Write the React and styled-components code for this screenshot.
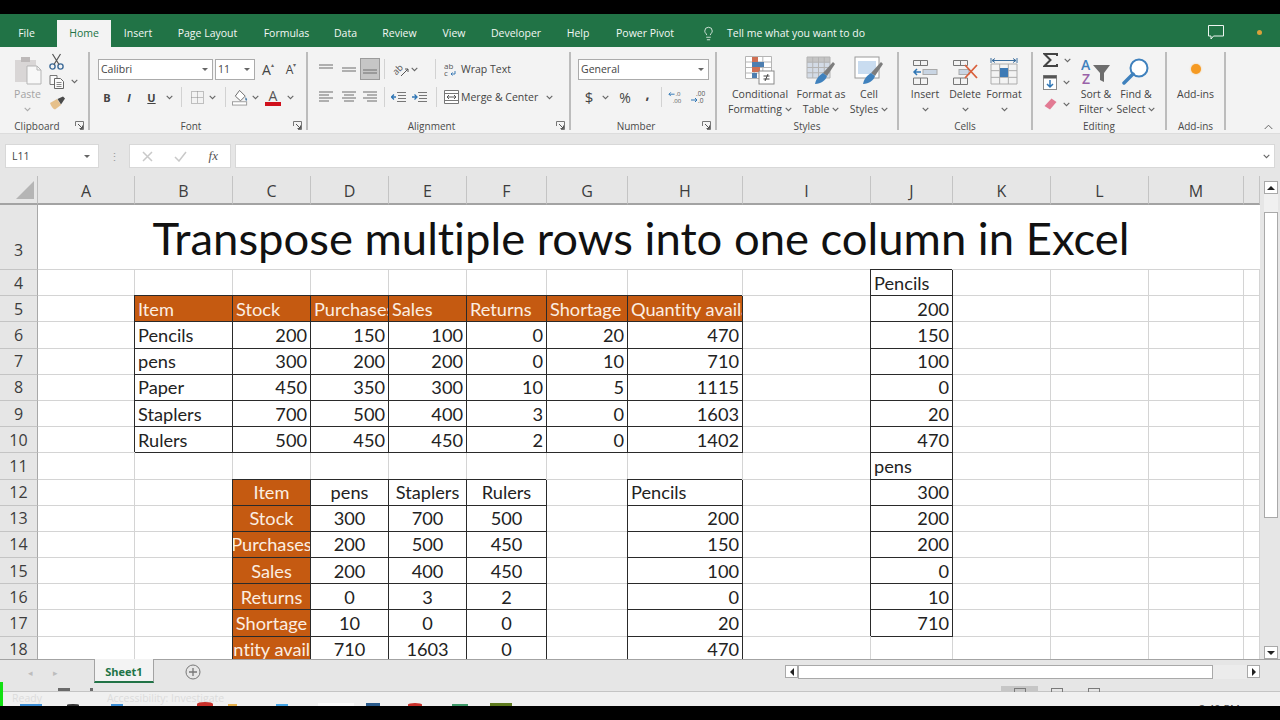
import React from "react";
import styled, { createGlobalStyle } from "styled-components";
import { Lightbulb } from "lucide-react";

const GlobalStyle = createGlobalStyle`
  html, body { margin: 0; padding: 0; background: #000; }
  * { box-sizing: border-box; }
`;

const uiFont = `"Open Sans", "Noto Sans", sans-serif`;
const cellFont = `Lato, "Liberation Sans", sans-serif`;

const Page = styled.div`
  position: relative;
  width: 1280px;
  height: 720px;
  overflow: hidden;
  display: flex;
  flex-direction: column;
  background: #000;
  font-family: ${uiFont};
  color: #444;
`;

const BlackBar = styled.div`
  height: ${(p) => p.$h}px;
  flex: none;
  background: #000;
`;

/* title bar tabs */
const TabBar = styled.div`
  height: 33px;
  flex: none;
  display: flex;
  align-items: flex-end;
  background: #217346;
  color: #f2f7f4;
  font-size: 10.5px;
`;

const Tab = styled.div`
  width: ${(p) => p.$w}px;
  margin-left: ${(p) => (p.$active ? 4 : 0)}px;
  height: 27px;
  padding-bottom: 1px;
  display: flex;
  align-items: center;
  justify-content: center;
  white-space: nowrap;
  background: ${(p) => (p.$active ? "#f3f3f3" : "transparent")};
  color: ${(p) => (p.$active ? "#217346" : "inherit")};
`;

const TellMe = styled.div`
  height: 27px;
  padding-bottom: 1px;
  margin-left: 12px;
  display: flex;
  align-items: center;
  gap: 11px;
  white-space: nowrap;
`;

const TabBarRight = styled.div`
  margin-left: auto;
  height: 33px;
  padding: 4px 18px 0 0;
  display: flex;
  align-items: center;
  gap: 33px;
`;

const AccountDot = styled.span`
  width: 5px;
  height: 5px;
  border-radius: 50%;
  background: #d9a13a;
`;

/* ribbon */
const Ribbon = styled.div`
  position: relative;
  height: 87px;
  flex: none;
  display: flex;
  padding: 5px 0 4px;
  background: #f3f3f3;
  border-bottom: 1px solid #dcdcdc;
  font-size: 10.5px;
`;

const Group = styled.div`
  position: relative;
  width: ${(p) => p.$w}px;
  height: 78px;
  flex: none;
  display: flex;
  flex-direction: column;
  border-right: 2px solid #bcbcbc;
`;

const GroupBody = styled.div`
  flex: 1;
  min-height: 0;
  display: flex;
  padding-left: ${(p) => p.$pad || 0}px;
`;

const GroupLabel = styled.div`
  height: 8px;
  line-height: 8px;
  text-align: center;
  font-size: 10px;
  white-space: nowrap;
  padding-right: ${(p) => p.$shift || 0}px;
  color: #4a4a4a;
`;

const Launcher = styled.svg`
  position: absolute;
  right: 4px;
  bottom: 0;
`;

const Stack = styled.div`
  display: flex;
  flex-direction: column;
  gap: 6px;
  padding-top: 6px;
`;

const ToolRow = styled.div`
  height: 22px;
  display: flex;
  align-items: center;
`;

const Slot = styled.div`
  width: ${(p) => p.$w}px;
  height: ${(p) => p.$h || 22}px;
  flex: none;
  margin-left: ${(p) => p.$ml || 0}px;
  padding-bottom: ${(p) => p.$pb || 0}px;
  display: flex;
  align-items: center;
  justify-content: center;
  color: ${(p) => p.$color || "#444"};
  font-size: ${(p) => p.$size || 11}px;
  font-weight: ${(p) => p.$weight || 400};
  font-style: ${(p) => (p.$italic ? "italic" : "normal")};
  text-decoration: ${(p) => (p.$under ? "underline" : "none")};
  background: ${(p) => (p.$on ? "#c6c6c6" : "transparent")};
  border: ${(p) => (p.$on ? "1px solid #9b9b9b" : "0")};
`;

const TinyMark = styled.span`
  font-size: 6px;
  margin-bottom: 8px;
  color: #666;
`;

const ToolSep = styled.div`
  width: 1px;
  height: 20px;
  flex: none;
  margin-left: ${(p) => p.$l || 6}px;
  margin-right: ${(p) => p.$r || 6}px;
  background: #d2d2d2;
`;

const SelectBox = styled.div`
  width: ${(p) => p.$w}px;
  height: 21px;
  flex: none;
  margin-left: ${(p) => p.$ml || 0}px;
  padding: 0 4px 0 2px;
  display: flex;
  align-items: center;
  justify-content: space-between;
  background: #fff;
  border: 1px solid #ababab;
  color: #444;
  font-size: 10.5px;
`;

const Caret = styled.span`
  width: 0;
  height: 0;
  flex: none;
  border-left: 3px solid transparent;
  border-right: 3px solid transparent;
  border-top: 3px solid ${(p) => p.$color || "#666"};
`;

const TextTool = styled.div`
  display: flex;
  align-items: center;
  white-space: nowrap;
  gap: ${(p) => p.$gap || 3}px;
  margin-left: ${(p) => p.$ml || 0}px;
  font-size: 10.5px;
`;

const LargeTool = styled.div`
  width: ${(p) => p.$w}px;
  flex: none;
  display: flex;
  flex-direction: column;
  align-items: center;
  color: ${(p) => (p.$muted ? "#a3a3a3" : "#444")};
  white-space: nowrap;
  line-height: 15px;
`;

const LargeIcon = styled.div`
  height: 31px;
  margin-top: 2px;
  margin-bottom: 2px;
  display: flex;
  align-items: flex-end;
`;

const LabelLine = styled.div`
  height: 15px;
  display: flex;
  align-items: center;
  gap: 3px;
`;

const SmallColumn = styled.div`
  width: ${(p) => p.$w}px;
  flex: none;
  display: flex;
  flex-direction: column;
`;

const SmallRow = styled.div`
  height: ${(p) => p.$h}px;
  margin-top: ${(p) => p.$mt || 0}px;
  display: flex;
  align-items: center;
  padding-left: ${(p) => p.$pad || 0}px;
  gap: ${(p) => p.$gap || 6}px;
`;

const CollapseIcon = styled.svg`
  position: absolute;
  right: 7px;
  bottom: 3px;
`;

/* formula bar */
const FormulaRow = styled.div`
  height: 42px;
  flex: none;
  display: flex;
  align-items: flex-start;
  padding: 10px 5px 0;
  background: #e6e6e6;
`;

const WhiteBox = styled.div`
  width: ${(p) => p.$w}px;
  height: 24px;
  flex: ${(p) => (p.$grow ? 1 : "none")};
  margin-left: ${(p) => p.$ml || 0}px;
  display: flex;
  align-items: center;
  justify-content: space-between;
  padding: ${(p) => p.$padding || "0 6px"};
  background: #fff;
  border: 1px solid #d8d8d8;
  font-size: 10.5px;
`;

const GripDots = styled.div`
  width: 30px;
  height: 24px;
  flex: none;
  display: flex;
  align-items: center;
  justify-content: center;
  color: #9a9a9a;
  font-size: 11px;
`;

const FxText = styled.span`
  font-family: "Liberation Serif", serif;
  font-style: italic;
  font-size: 13px;
  color: #555;
`;

/* worksheet */
const SheetArea = styled.div`
  flex: 1;
  min-height: 0;
  display: flex;
  overflow: hidden;
  background: #e6e6e6;
`;

const Grid = styled.div`
  width: 1260px;
  flex: none;
  display: grid;
  grid-template-columns: 38px 97px 98px 78px 78px 78px 80px 81px 115px 128px 82px 98px 98px 95px 16px;
  grid-template-rows: 29px 65px repeat(15, 26.2px);
  overflow: hidden;
  background: #fff;
  font-variant-ligatures: none;
`;

const CornerCell = styled.div`
  display: flex;
  align-items: center;
  justify-content: flex-end;
  padding: 0 3px 0 0;
  background: #e6e6e6;
  border-right: 1px solid #bdbdbd;
  border-bottom: 2px solid #a3a3a3;
`;

const ColHead = styled.div`
  display: flex;
  align-items: center;
  justify-content: center;
  padding-top: 2px;
  background: #e6e6e6;
  border-right: 1px solid #c4c4c4;
  border-bottom: 2px solid #a3a3a3;
  font-size: 16px;
  color: #3d3d3d;
`;

const RowHead = styled.div`
  display: flex;
  align-items: ${(p) => (p.$tall ? "flex-end" : "center")};
  justify-content: center;
  padding-bottom: ${(p) => (p.$tall ? 8 : 0)}px;
  background: #e6e6e6;
  border-right: 1px solid #a8a8a8;
  border-bottom: 1px solid #c4c4c4;
  font-size: 16px;
  color: #3d3d3d;
`;

const TitleCell = styled.div`
  grid-column: 2 / -1;
  display: flex;
  align-items: flex-end;
  justify-content: center;
  padding: 0 16px 3px 0;
  border-bottom: 1px solid #d4d4d4;
  font-family: ${cellFont};
  font-size: 45.4px;
  line-height: 56px;
  color: #111;
  white-space: nowrap;
`;

const kindAlign = { text: "flex-start", num: "flex-end", mid: "center", head: "flex-start", headMid: "center" };

const Cell = styled.div`
  display: flex;
  align-items: center;
  justify-content: ${(p) => kindAlign[p.$kind] || "flex-start"};
  padding: 0 3px;
  overflow: hidden;
  white-space: nowrap;
  font-family: ${cellFont};
  font-size: 18.2px;
  color: ${(p) => (p.$kind && p.$kind.startsWith("head") ? "#fbeee2" : "#222")};
  background: ${(p) => (p.$kind && p.$kind.startsWith("head") ? "#c55a11" : "#fff")};
  border-right: 1px solid ${(p) => (p.$kind ? "#2a2a2a" : "#d4d4d4")};
  border-bottom: 1px solid ${(p) => (p.$kind ? "#2a2a2a" : "#d4d4d4")};
  box-shadow: ${(p) => (p.$kind ? "-1px -1px 0 0 #2a2a2a" : "none")};
  span { flex: none; }
`;

const VScroll = styled.div`
  width: 20px;
  flex: none;
  display: flex;
  flex-direction: column;
  align-items: center;
  padding: 5px 2px 0 4px;
  background: #e6e6e6;
`;

const ScrollButton = styled.div`
  width: ${(p) => p.$w || 14}px;
  height: 13px;
  flex: none;
  display: flex;
  align-items: center;
  justify-content: center;
  background: #fff;
  border: 1px solid #a9a9a9;
  margin-top: ${(p) => (p.$push ? "auto" : 0)};
`;

const Arrow = styled.span`
  width: 0;
  height: 0;
  border-style: solid;
  border-color: transparent;
  border-width: 4px;
  ${(p) => (p.$dir === "up" ? "border-bottom-color:#222;border-top-width:0;" : "")}
  ${(p) => (p.$dir === "down" ? "border-top-color:#222;border-bottom-width:0;" : "")}
  ${(p) => (p.$dir === "left" ? "border-right-color:#222;border-left-width:0;" : "")}
  ${(p) => (p.$dir === "right" ? "border-left-color:#222;border-right-width:0;" : "")}
`;

const VTrack = styled.div`
  width: 14px;
  height: 18px;
  flex: none;
  background: #f0f0f0;
`;

const VThumb = styled.div`
  width: 14px;
  height: 306px;
  flex: none;
  background: #fff;
  border: 1px solid #a9a9a9;
`;

/* bottom strip */
const SheetTabs = styled.div`
  height: 27px;
  flex: none;
  display: flex;
  align-items: flex-start;
  background: #e6e6e6;
  border-top: 1px solid #a3a3a3;
`;

const TabNav = styled.div`
  width: 94px;
  height: 25px;
  flex: none;
  display: flex;
  align-items: center;
  justify-content: flex-end;
  gap: 20px;
  padding-right: 36px;
  color: #bdbdbd;
  font-size: 9px;
`;

const SheetTab = styled.div`
  width: 60px;
  height: 24px;
  margin-top: -1px;
  padding-top: 2px;
  flex: none;
  display: flex;
  align-items: center;
  justify-content: center;
  background: #f3f3f3;
  border-left: 1px solid #a3a3a3;
  border-right: 1px solid #a3a3a3;
  border-bottom: 2px solid #217346;
  color: #217346;
  font-weight: 700;
  font-size: 11px;
`;

const AddSheet = styled.svg`
  margin: 4px 0 0 31px;
  flex: none;
`;

const HScroll = styled.div`
  margin: 5px 20px 0 auto;
  width: 475px;
  height: 14px;
  display: flex;
  align-items: stretch;
`;

const HThumb = styled.div`
  width: 415px;
  flex: none;
  background: #fff;
  border: 1px solid #a9a9a9;
`;

const HTrack = styled.div`
  flex: 1;
  background: #ececec;
`;

const StatusBar = styled.div`
  position: relative;
  height: 20px;
  flex: none;
  overflow: hidden;
  background: #f0f0f0;
  font-size: 10.5px;
  color: #dcdcdc;
`;

const StatusTop = styled.div`
  height: 6px;
  display: flex;
  padding-right: 168px;
  background: #e6e6e6;
  border-bottom: 1px solid #c4c4c4;
`;

const StatusMark = styled.span`
  width: ${(p) => p.$w}px;
  height: 3px;
  margin: 2px 0 0 ${(p) => p.$ml}px;
  background: #6a6a6a;
`;

const ViewSlot = styled.div`
  width: 37px;
  height: 6px;
  margin-left: ${(p) => (p.$first ? "auto" : 0)};
  background: ${(p) => (p.$on ? "#c6c6c6" : "transparent")};
  display: flex;
  justify-content: center;
  align-items: flex-end;
`;

const ViewGlyph = styled.span`
  width: 12px;
  height: 4px;
  border: 1px solid #7a7a7a;
  border-bottom: 0;
`;

const StatusText = styled.div`
  display: flex;
  align-items: center;
  gap: 65px;
  padding: 0 0 0 12px;
  height: 11px;
`;

const GhostRow = styled.div`
  position: absolute;
  left: 0;
  right: 0;
  bottom: 0;
  height: 4px;
  display: flex;
  align-items: flex-end;
`;

const Ghost = styled.span`
  width: ${(p) => p.$w}px;
  height: ${(p) => p.$h}px;
  margin-left: ${(p) => p.$ml}px;
  flex: none;
  background: ${(p) => p.$color};
  border-radius: ${(p) => (p.$round ? "50% 50% 0 0" : "0")};
`;

const Clock = styled.span`
  position: absolute;
  right: 40px;
  bottom: -10px;
  font-size: 11px;
  line-height: 14px;
  color: #4a4a4a;
`;

const GreenEdge = styled.div`
  position: absolute;
  left: 0;
  bottom: 14px;
  width: 2.5px;
  height: 24px;
  background: #12e012;
`;

const AddinDot = styled.span`
  width: 10px;
  height: 10px;
  margin-bottom: 11px;
  border-radius: 50%;
  background: #f59a23;
  box-shadow: 0 0 2px #f8c27a;
`;

const Chev = ({ color = "#666" }) => (
  <svg width="7" height="5" viewBox="0 0 7 5">
    <path d="M.7.8 3.5 3.6 6.3.8" fill="none" stroke={color} strokeWidth="1.1" />
  </svg>
);

const LauncherIcon = () => (
  <Launcher width="9" height="9" viewBox="0 0 9 9">
    <path d="M.5 5V.5H8.5V8.5H5" fill="none" stroke="#777" />
    <path d="M3 3 7.5 7.5M7.5 4.5V7.5H4.5" fill="none" stroke="#555" />
  </Launcher>
);

const Lines = ({ items, color = "#777", w = 16, h = 14 }) => (
  <svg width={w} height={h} viewBox={`0 0 ${w} ${h}`}>
    {items.map(([x1, x2, y], i) => (
      <line key={i} x1={x1} x2={x2} y1={y} y2={y} stroke={color} strokeWidth="1.1" />
    ))}
  </svg>
);

const PasteIcon = () => (
  <svg width="28" height="29" viewBox="0 0 28 29">
    <rect x="1" y="4" width="21" height="22" fill="#d9d6d6" />
    <rect x="7" y="1" width="9" height="5" fill="#bdb9b9" />
    <path d="M13 10H23L27 14V28H13Z" fill="#f8f8f8" stroke="#b5b5b5" />
    <path d="M23 10V14H27" fill="none" stroke="#b5b5b5" />
  </svg>
);

const CutIcon = () => (
  <svg width="15" height="18" viewBox="0 0 15 18">
    <g fill="none" stroke="#3e6c99" strokeWidth="1.4">
      <circle cx="3.5" cy="13.5" r="2.6" />
      <circle cx="11.5" cy="13.5" r="2.6" />
    </g>
    <path d="M5 11.5 11.5 1M10 11.5 3.5 1" stroke="#555" strokeWidth="1.2" />
  </svg>
);

const CopyIcon = () => (
  <svg width="16" height="14" viewBox="0 0 16 14">
    <path d="M1 .5H8V9.5H1Z" fill="#fafafa" stroke="#777" />
    <path d="M5.5 3.5H11.5L14.5 6.5V13.5H5.5Z" fill="#fafafa" stroke="#666" />
    <path d="M7.5 7.5H12.5M7.5 9.5H12.5M7.5 11.5H12.5" stroke="#888" />
  </svg>
);

const BrushIcon = () => (
  <svg width="17" height="14" viewBox="0 0 17 14">
    <path d="M1 7 8 3 12 9 6 13.5C4 13 2 10 1 7Z" fill="#e6c08a" />
    <path d="M8.5 3 12 8.5 16 2.5 14 .5Z" fill="#4a4a4a" />
  </svg>
);

const BordersIcon = () => (
  <svg width="13" height="13" viewBox="0 0 13 13">
    <path d="M.5.5H12.5V12.5H.5ZM6.5.5V12.5M.5 6.5H12.5" fill="none" stroke="#8a8a8a" strokeDasharray="1 1" />
  </svg>
);

const FillIcon = () => (
  <svg width="18" height="17" viewBox="0 0 18 17">
    <path d="M8 1 14 7 9 12 3.5 7Z" fill="#fff" stroke="#666" />
    <path d="M14.5 8C16 10 16.5 11 15.5 12 14 12 13.5 10 14.5 8Z" fill="#4d7ea8" />
    <rect x=".5" y="13" width="15" height="3.5" fill="#fff" stroke="#9a9a9a" />
  </svg>
);

const FontColorIcon = () => (
  <svg width="16" height="17" viewBox="0 0 16 17">
    <text x="8" y="12" textAnchor="middle" fontFamily="Open Sans" fontSize="14" fill="#555">A</text>
    <rect x="0" y="13" width="16" height="4" fill="#d0101c" />
  </svg>
);

const OrientIcon = () => (
  <svg width="17" height="15" viewBox="0 0 17 15">
    <text x="1" y="12" transform="rotate(-45 4 10)" fontFamily="Open Sans" fontSize="9" fill="#555">ab</text>
    <path d="M8 14 15 7M12 7H15V10" fill="none" stroke="#555" />
  </svg>
);

const IndentIcon = ({ flip }) => (
  <svg width="16" height="12" viewBox="0 0 16 12">
    <path d="M6 1.5H15M7 4.5H15M7 7.5H15M6 10.5H15" stroke="#777" />
    <path d={flip ? "M0 6H4.5M2.5 3.5 5 6 2.5 8.5" : "M5 6H.5M3 3.5.5 6 3 8.5"} fill="none" stroke="#2f76b5" strokeWidth="1.3" />
  </svg>
);

const WrapIcon = () => (
  <svg width="14" height="15" viewBox="0 0 14 15" fontFamily="Open Sans" fontSize="8" fill="#555">
    <text x="0" y="6.5">ab</text>
    <text x="0" y="14">c</text>
    <path d="M11 9V12H7M8.5 10.5 7 12 8.5 13.5" fill="none" stroke="#3a7ab5" />
  </svg>
);

const MergeIcon = () => (
  <svg width="15" height="14" viewBox="0 0 15 14">
    <path d="M.5.5H14.5V13.5H.5ZM.5 3.5H14.5M.5 10.5H14.5" fill="#fff" stroke="#777" />
    <path d="M3 7H12M5 5 3 7 5 9M10 5 12 7 10 9" fill="none" stroke="#555" />
  </svg>
);

const DecimalIcon = ({ flip }) => (
  <svg width="16" height="14" viewBox="0 0 16 14" fontFamily="Open Sans" fontSize="6.5" fill="#555">
    {flip ? (
      <>
        <text x="6" y="6">.00</text>
        <text x="8" y="13">.0</text>
        <path d="M1 10H7M5 8 7 10 5 12" fill="none" stroke="#2f76b5" />
      </>
    ) : (
      <>
        <text x="8" y="6">.0</text>
        <text x="5" y="13">.00</text>
        <path d="M7 4H1M3 2 1 4 3 6" fill="none" stroke="#2f76b5" />
      </>
    )}
  </svg>
);

const TableGrid = ({ x, y, w, h, nx, ny, stroke = "#a8a8a8" }) => {
  const lines = [];
  for (let i = 0; i <= nx; i++) lines.push(<line key={"v" + i} x1={x + (w * i) / nx} x2={x + (w * i) / nx} y1={y} y2={y + h} stroke={stroke} />);
  for (let i = 0; i <= ny; i++) lines.push(<line key={"h" + i} x1={x} x2={x + w} y1={y + (h * i) / ny} y2={y + (h * i) / ny} stroke={stroke} />);
  return <g>{lines}</g>;
};

const ConditionalIcon = () => (
  <svg width="30" height="29" viewBox="0 0 30 29">
    <rect x="0.5" y="0.5" width="26" height="22" fill="#fff" />
    <TableGrid x={0.5} y={0.5} w={26} h={22} nx={3} ny={4} stroke="#b5b5b5" />
    <rect x="7" y="1" width="6" height="5" fill="#cf6f53" />
    <rect x="7" y="6" width="12" height="5" fill="#4d7eb0" />
    <rect x="7" y="11" width="8" height="5" fill="#cf6f53" />
    <rect x="7" y="17" width="5" height="5" fill="#4d7eb0" />
    <rect x="14" y="15" width="15" height="13" fill="#fff" stroke="#8a8a8a" />
    <path d="M18.5 20H24.5M18.5 23H24.5M23 18 20 25" stroke="#444" fill="none" />
  </svg>
);

const FormatTableIcon = () => (
  <svg width="30" height="29" viewBox="0 0 30 29">
    <rect x="1" y="1" width="23" height="5" fill="#c4c4c4" />
    <rect x="1" y="6" width="23" height="16" fill="#d3dbe6" />
    <TableGrid x={1} y={1} w={23} h={21} nx={4} ny={4} stroke="#b3b3b3" />
    <path d="M17 17 27 6 29 8 21 20Z" fill="#7d7d7d" />
    <path d="M9 28C10 22 14 19 17 17L21 20C20 24 15 28 9 28Z" fill="#3f81bd" />
  </svg>
);

const CellStylesIcon = () => (
  <svg width="30" height="29" viewBox="0 0 30 29">
    <rect x="1" y="1" width="24" height="21" fill="#fff" stroke="#9a9a9a" />
    <rect x="4" y="5" width="18" height="13" fill="#c9dcf0" />
    <path d="M17 17 27 6 29 8 21 20Z" fill="#7d7d7d" />
    <path d="M9 28C10 22 14 19 17 17L21 20C20 24 15 28 9 28Z" fill="#3f81bd" />
  </svg>
);

const InsertCellsIcon = () => (
  <svg width="26" height="26" viewBox="0 0 26 26">
    <TableGrid x={1.5} y={1.5} w={14} h={5} nx={2} ny={1} stroke="#777" />
    <rect x="11" y="10.5" width="14" height="5" fill="#c9d5e3" stroke="#a9a9a9" />
    <path d="M9 13H2M5 10 2 13 5 16" fill="none" stroke="#2f76b5" strokeWidth="1.5" />
    <TableGrid x={1.5} y={19} w={14} h={6.5} nx={2} ny={1} stroke="#777" />
  </svg>
);

const DeleteCellsIcon = () => (
  <svg width="26" height="26" viewBox="0 0 26 26">
    <TableGrid x={1.5} y={1.5} w={14} h={5} nx={2} ny={1} stroke="#777" />
    <rect x="7" y="10.5" width="10" height="5" fill="#c9d5e3" stroke="#a9a9a9" />
    <TableGrid x={1.5} y={19} w={14} h={6.5} nx={2} ny={1} stroke="#777" />
    <path d="M13 6 25 19M25 6 13 19" stroke="#d9603c" strokeWidth="1.8" />
  </svg>
);

const FormatCellsIcon = () => (
  <svg width="28" height="28" viewBox="0 0 28 28">
    <path d="M1 1V6M27 1V6M2 3.5H26M5 1.5 2 3.5 5 5.5M23 1.5 26 3.5 23 5.5" fill="none" stroke="#3d6f9e" />
    <TableGrid x={1} y={7} w={26} h={20} nx={3} ny={3} stroke="#adadad" />
    <rect x="10" y="11" width="8" height="9" fill="#3d7ab5" />
  </svg>
);

const SumIcon = () => (
  <svg width="15" height="14" viewBox="0 0 15 14">
    <path d="M14 3V1H1.5L7.5 7 1.5 13H14V11" fill="none" stroke="#444" strokeWidth="2" />
  </svg>
);

const FillDownIcon = () => (
  <svg width="14" height="15" viewBox="0 0 14 15">
    <rect x=".5" y=".5" width="13" height="14" fill="#fff" stroke="#8a8a8a" />
    <rect x=".5" y=".5" width="13" height="3" fill="#555" />
    <path d="M7 5V12M4 9 7 12 10 9" fill="none" stroke="#2f76b5" strokeWidth="1.5" />
  </svg>
);

const EraserIcon = () => (
  <svg width="13" height="12" viewBox="0 0 13 12">
    <path d="M7.5.5 12.5 4 6 11.5 .5 8Z" fill="#e27a93" />
  </svg>
);

const SortFilterIcon = () => (
  <svg width="30" height="28" viewBox="0 0 30 28" fontFamily="Open Sans" fontWeight="600" fontSize="14">
    <text x="0" y="13" fill="#3f81bd">A</text>
    <text x="1" y="27" fill="#9a62a8">Z</text>
    <path d="M12 8H29L23 16V25L19 23V16Z" fill="#6d6d6d" />
  </svg>
);

const FindIcon = () => (
  <svg width="28" height="28" viewBox="0 0 28 28">
    <circle cx="17" cy="11" r="8.5" fill="#fff" stroke="#3f81bd" strokeWidth="2" />
    <path d="M11 17 2 26" stroke="#3f81bd" strokeWidth="3.5" strokeLinecap="round" />
  </svg>
);

const columns = ["A", "B", "C", "D", "E", "F", "G", "H", "I", "J", "K", "L", "M", "N"];
const rowNumbers = [4, 5, 6, 7, 8, 9, 10, 11, 12, 13, 14, 15, 16, 17, 18];

const headers = ["Item", "Stock", "Purchases", "Sales", "Returns", "Shortage", "Quantity available"];
const products = [
  ["Pencils", 200, 150, 100, 0, 20, 470],
  ["pens", 300, 200, 200, 0, 10, 710],
  ["Paper", 450, 350, 300, 10, 5, 1115],
  ["Staplers", 700, 500, 400, 3, 0, 1603],
  ["Rulers", 500, 450, 450, 2, 0, 1402],
];

const buildSheet = () => {
  const sheet = {};
  const put = (col, row, kind, value) => {
    sheet[col + row] = { kind, value };
  };

  // source table
  headers.forEach((h, i) => put(columns[i + 1], 5, "head", h));
  products.forEach((p, r) =>
    p.forEach((v, i) => put(columns[i + 1], 6 + r, i === 0 ? "text" : "num", v))
  );

  // transposed table, pens / staplers / rulers
  headers.forEach((h, r) => {
    put("C", 12 + r, "headMid", h);
    put("D", 12 + r, "mid", products[1][r]);
    put("E", 12 + r, "mid", products[3][r]);
    put("F", 12 + r, "mid", products[4][r]);
  });
  put("F", 18, "mid", 0); // the sheet really shows 0 here

  // single column results
  products[0].forEach((v, r) => put("H", 12 + r, r === 0 ? "text" : "num", v));
  products[0].forEach((v, r) => put("J", 4 + r, r === 0 ? "text" : "num", v));
  products[1].forEach((v, r) => put("J", 11 + r, r === 0 ? "text" : "num", v));
  return sheet;
};

const sheet = buildSheet();

const tabs = [
  ["File", 53],
  ["Home", 54, true],
  ["Insert", 54],
  ["Page Layout", 85],
  ["Formulas", 73],
  ["Data", 45],
  ["Review", 63],
  ["View", 46],
  ["Developer", 78],
  ["Help", 46],
  ["Power Pivot", 88],
];

const ghosts = [
  { $ml: 20, $w: 22, $h: 2, $color: "#3d8fd6" },
  { $ml: 25, $w: 12, $h: 2, $color: "#333", $round: true },
  { $ml: 32, $w: 12, $h: 2, $color: "#3d8fd6" },
  { $ml: 74, $w: 16, $h: 4, $color: "#c9302a", $round: true },
  { $ml: 15, $w: 9, $h: 2, $color: "#e6b04d" },
  { $ml: 39, $w: 12, $h: 2, $color: "#45a5e6" },
  { $ml: 30, $w: 36, $h: 3, $color: "#fafafa" },
  { $ml: 12, $w: 14, $h: 3, $color: "#2a5b8c" },
  { $ml: 28, $w: 14, $h: 3, $color: "#c9302a", $round: true },
  { $ml: 30, $w: 16, $h: 2, $color: "#3f9a6a" },
  { $ml: 22, $w: 22, $h: 3, $color: "#5e7a1e" },
];

const App = () => (
  <Page>
    <GlobalStyle />
    <BlackBar $h={14} />

    <TabBar>
      {tabs.map(([label, w, active]) => (
        <Tab key={label} $w={w} $active={active}>
          {label}
        </Tab>
      ))}
      <TellMe>
        <Lightbulb size={15} strokeWidth={1.3} />
        Tell me what you want to do
      </TellMe>
      <TabBarRight>
        <svg width="16" height="15" viewBox="0 0 16 15">
          <path d="M.5.5H15.5V11H5.5L3 14V11H.5Z" fill="none" stroke="#eef5f1" />
        </svg>
        <AccountDot />
      </TabBarRight>
    </TabBar>

    <Ribbon>
      <Group $w={90}>
        <GroupBody $pad={10}>
          <LargeTool $w={35} $muted>
            <LargeIcon><PasteIcon /></LargeIcon>
            <LabelLine>Paste</LabelLine>
            <LabelLine><Chev color="#aaa" /></LabelLine>
          </LargeTool>
          <SmallColumn $w={40}>
            <SmallRow $h={19} $pad={4}><CutIcon /></SmallRow>
            <SmallRow $h={21} $pad={4}><CopyIcon /><Chev /></SmallRow>
            <SmallRow $h={21} $pad={4}><BrushIcon /></SmallRow>
          </SmallColumn>
        </GroupBody>
        <GroupLabel $shift={14}>Clipboard</GroupLabel>
        <LauncherIcon />
      </Group>

      <Group $w={218}>
        <GroupBody>
          <Stack>
            <ToolRow>
              <SelectBox $w={115} $ml={8}>Calibri<Caret /></SelectBox>
              <SelectBox $w={40} $ml={2}>11<Caret /></SelectBox>
              <Slot $w={26} $size={14}>A<TinyMark>▴</TinyMark></Slot>
              <Slot $w={20} $size={12}>A<TinyMark>▾</TinyMark></Slot>
            </ToolRow>
            <ToolRow>
              <Slot $w={22} $ml={6} $size={11} $weight={700}>B</Slot>
              <Slot $w={22} $size={11} $italic $weight={700}>I</Slot>
              <Slot $w={23} $size={11} $under $weight={700}>U</Slot>
              <Slot $w={12}><Chev /></Slot>
              <ToolSep />
              <Slot $w={18}><BordersIcon /></Slot>
              <Slot $w={13}><Chev /></Slot>
              <ToolSep />
              <Slot $w={17}><FillIcon /></Slot>
              <Slot $w={13}><Chev /></Slot>
              <Slot $w={22}><FontColorIcon /></Slot>
              <Slot $w={12}><Chev /></Slot>
            </ToolRow>
          </Stack>
        </GroupBody>
        <GroupLabel $shift={14}>Font</GroupLabel>
        <LauncherIcon />
      </Group>

      <Group $w={263}>
        <GroupBody $pad={7}>
          <Stack>
            <ToolRow>
              <Slot $w={22}><Lines items={[[1, 15, 3], [1, 15, 6]]} /></Slot>
              <Slot $w={23}><Lines items={[[1, 15, 6], [1, 15, 9]]} /></Slot>
              <Slot $w={20} $on><Lines items={[[1, 15, 8], [1, 15, 11]]} /></Slot>
              <ToolSep $l={4} $r={7} />
              <Slot $w={18}><OrientIcon /></Slot>
              <Slot $w={8}><Chev /></Slot>
              <ToolSep $l={17} $r={8} />
              <TextTool><WrapIcon /><span>Wrap Text</span></TextTool>
            </ToolRow>
            <ToolRow>
              <Slot $w={22}><Lines items={[[1, 15, 2], [1, 11, 5], [1, 15, 8], [1, 11, 11]]} /></Slot>
              <Slot $w={23}><Lines items={[[1, 15, 2], [3, 13, 5], [1, 15, 8], [3, 13, 11]]} /></Slot>
              <Slot $w={20}><Lines items={[[1, 15, 2], [5, 15, 5], [1, 15, 8], [5, 15, 11]]} /></Slot>
              <ToolSep $l={4} $r={4} />
              <Slot $w={20}><IndentIcon /></Slot>
              <Slot $w={21}><IndentIcon flip /></Slot>
              <ToolSep $l={6} $r={6} />
              <TextTool $gap={2} $ml={1}><MergeIcon /><span>Merge &amp; Center</span></TextTool>
              <Slot $w={22}><Chev /></Slot>
            </ToolRow>
          </Stack>
        </GroupBody>
        <GroupLabel $shift={14}>Alignment</GroupLabel>
        <LauncherIcon />
      </Group>

      <Group $w={146}>
        <GroupBody $pad={7}>
          <Stack>
            <ToolRow><SelectBox $w={131}>General<Caret /></SelectBox></ToolRow>
            <ToolRow>
              <Slot $w={22} $size={15}>$</Slot>
              <Slot $w={10}><Chev /></Slot>
              <Slot $w={30} $size={14}>%</Slot>
              <Slot $w={15} $size={14} $weight={700} $pb={8}>,</Slot>
              <ToolSep />
              <Slot $w={15}><DecimalIcon /></Slot>
              <Slot $w={30}><DecimalIcon flip /></Slot>
            </ToolRow>
          </Stack>
        </GroupBody>
        <GroupLabel $shift={14}>Number</GroupLabel>
        <LauncherIcon />
      </Group>

      <Group $w={182}>
        <GroupBody $pad={3}>
          <LargeTool $w={80}>
            <LargeIcon><ConditionalIcon /></LargeIcon>
            <LabelLine>Conditional</LabelLine>
            <LabelLine>Formatting <Chev /></LabelLine>
          </LargeTool>
          <LargeTool $w={42}>
            <LargeIcon><FormatTableIcon /></LargeIcon>
            <LabelLine>Format as</LabelLine>
            <LabelLine>Table <Chev /></LabelLine>
          </LargeTool>
          <LargeTool $w={54}>
            <LargeIcon><CellStylesIcon /></LargeIcon>
            <LabelLine>Cell</LabelLine>
            <LabelLine>Styles <Chev /></LabelLine>
          </LargeTool>
        </GroupBody>
        <GroupLabel>Styles</GroupLabel>
      </Group>

      <Group $w={134}>
        <GroupBody $pad={7}>
          <LargeTool $w={38}>
            <LargeIcon><InsertCellsIcon /></LargeIcon>
            <LabelLine>Insert</LabelLine>
            <LabelLine><Chev /></LabelLine>
          </LargeTool>
          <LargeTool $w={42}>
            <LargeIcon><DeleteCellsIcon /></LargeIcon>
            <LabelLine>Delete</LabelLine>
            <LabelLine><Chev /></LabelLine>
          </LargeTool>
          <LargeTool $w={36}>
            <LargeIcon><FormatCellsIcon /></LargeIcon>
            <LabelLine>Format</LabelLine>
            <LabelLine><Chev /></LabelLine>
          </LargeTool>
        </GroupBody>
        <GroupLabel>Cells</GroupLabel>
      </Group>

      <Group $w={134}>
        <GroupBody $pad={10}>
          <SmallColumn $w={34}>
            <SmallRow $h={16}><SumIcon /><Chev /></SmallRow>
            <SmallRow $h={22} $mt={3}><FillDownIcon /><Chev /></SmallRow>
            <SmallRow $h={22} $pad={1}><EraserIcon /><Chev /></SmallRow>
          </SmallColumn>
          <LargeTool $w={38}>
            <LargeIcon><SortFilterIcon /></LargeIcon>
            <LabelLine>Sort &amp;</LabelLine>
            <LabelLine>Filter <Chev /></LabelLine>
          </LargeTool>
          <LargeTool $w={42}>
            <LargeIcon><FindIcon /></LargeIcon>
            <LabelLine>Find &amp;</LabelLine>
            <LabelLine>Select <Chev /></LabelLine>
          </LargeTool>
        </GroupBody>
        <GroupLabel>Editing</GroupLabel>
      </Group>

      <Group $w={59}>
        <GroupBody>
          <LargeTool $w={57}>
            <LargeIcon><AddinDot /></LargeIcon>
            <LabelLine>Add-ins</LabelLine>
          </LargeTool>
        </GroupBody>
        <GroupLabel>Add-ins</GroupLabel>
      </Group>

      <CollapseIcon width="9" height="6" viewBox="0 0 9 6">
        <path d="M.7 5 4.5 1.2 8.3 5" fill="none" stroke="#666" />
      </CollapseIcon>
    </Ribbon>

    <FormulaRow>
      <WhiteBox $w={94} $padding="0 8px 0 6px">
        L11<Caret />
      </WhiteBox>
      <GripDots>⋮</GripDots>
      <WhiteBox $w={102} $padding="0 12px">
        <svg width="11" height="11" viewBox="0 0 11 11">
          <path d="M1 1 10 10M10 1 1 10" stroke="#c9c9c9" strokeWidth="1.5" />
        </svg>
        <svg width="13" height="11" viewBox="0 0 13 11">
          <path d="M1 6 5 10 12 1" fill="none" stroke="#c9c9c9" strokeWidth="1.5" />
        </svg>
        <FxText>fx</FxText>
      </WhiteBox>
      <WhiteBox $grow $ml={4} $padding="0 4px 0 0">
        <span />
        <Chev />
      </WhiteBox>
    </FormulaRow>

    <SheetArea>
      <Grid>
        <CornerCell>
          <svg width="18" height="18" viewBox="0 0 18 18">
            <path d="M18 0V18H0Z" fill="#b5b5b5" />
          </svg>
        </CornerCell>
        {columns.map((c) => (
          <ColHead key={c}>{c === "N" ? "" : c}</ColHead>
        ))}

        <RowHead $tall>3</RowHead>
        <TitleCell>Transpose multiple rows into one column in Excel</TitleCell>

        {rowNumbers.map((r) => (
          <React.Fragment key={r}>
            <RowHead>{r}</RowHead>
            {columns.map((c) => {
              const cell = sheet[c + r];
              return (
                <Cell key={c} $kind={cell && cell.kind}>
                  {cell && <span>{cell.value}</span>}
                </Cell>
              );
            })}
          </React.Fragment>
        ))}
      </Grid>

      <VScroll>
        <ScrollButton><Arrow $dir="up" /></ScrollButton>
        <VTrack />
        <VThumb />
        <ScrollButton $push><Arrow $dir="down" /></ScrollButton>
      </VScroll>
    </SheetArea>

    <SheetTabs>
      <TabNav>
        <span>◂</span>
        <span>▸</span>
      </TabNav>
      <SheetTab>Sheet1</SheetTab>
      <AddSheet width="16" height="16" viewBox="0 0 16 16">
        <circle cx="8" cy="8" r="7" fill="none" stroke="#777" />
        <path d="M8 4V12M4 8H12" stroke="#777" strokeWidth="1.3" />
      </AddSheet>
      <HScroll>
        <ScrollButton $w={13}><Arrow $dir="left" /></ScrollButton>
        <HThumb />
        <HTrack />
        <ScrollButton $w={13}><Arrow $dir="right" /></ScrollButton>
      </HScroll>
    </SheetTabs>

    <StatusBar>
      <StatusTop>
        <StatusMark $w={12} $ml={58} />
        <StatusMark $w={3} $ml={20} />
        <ViewSlot $on $first><ViewGlyph /></ViewSlot>
        <ViewSlot><ViewGlyph /></ViewSlot>
        <ViewSlot><ViewGlyph /></ViewSlot>
      </StatusTop>
      <StatusText>
        <span>Ready</span>
        <span>Accessibility: Investigate</span>
      </StatusText>
      <GhostRow>
        {ghosts.map((g, i) => (
          <Ghost key={i} {...g} />
        ))}
      </GhostRow>
      <Clock>8:40 PM</Clock>
    </StatusBar>

    <BlackBar $h={14} />
    <GreenEdge />
  </Page>
);

export default App;
